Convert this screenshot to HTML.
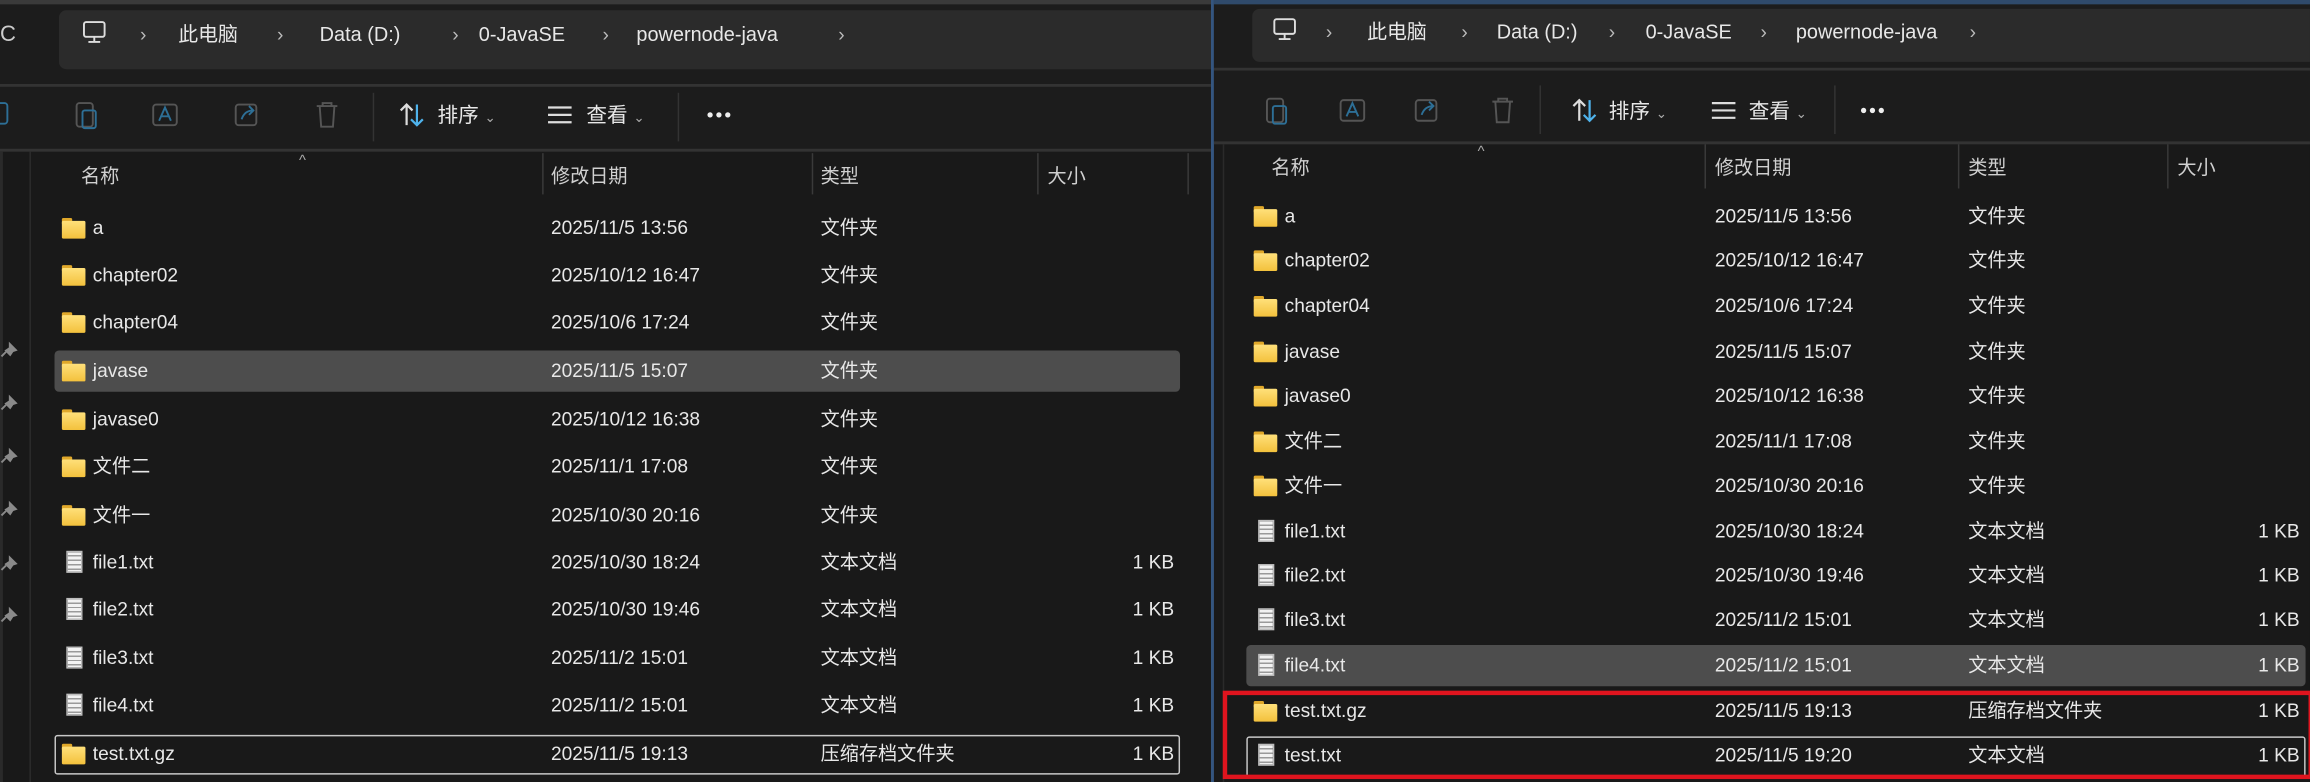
<!DOCTYPE html>
<html><head><meta charset="utf-8"><style>
html,body{margin:0;padding:0;background:#191919;width:2310px;height:782px;overflow:hidden}
#s{position:absolute;left:0;top:0;width:1568px;height:531px;transform:scale(1.47321,1.4727);transform-origin:0 0;background:#191919;font-family:"Liberation Sans","Noto Sans CJK SC",sans-serif;color:#e8e8e8;font-size:13px}
.a{position:absolute;white-space:nowrap;line-height:18px}
.t{position:absolute;white-space:nowrap;line-height:18px;margin-top:-9px}
.hd{color:#d0d0d0}
.bc{font-size:13.5px}
.cv{color:#bbb;font-size:13px}
.vl{position:absolute;width:1px;background:#3a3a3a}
.fd{position:absolute;width:16px;height:12px;margin-top:-6px}
.fd:before{content:"";position:absolute;left:0;top:-2px;width:7px;height:4px;background:#e0a82a;border-radius:1px 1px 0 0}
.fd:after{content:"";position:absolute;left:0;top:0;width:16px;height:12px;background:linear-gradient(#ffe07a,#f3c13c);border-radius:1px}
.fl{position:absolute;width:11px;height:15px;margin-top:-8px;background:repeating-linear-gradient(#f2f2f2 0 2px,#9a9a9a 2px 3px);border:1px solid #bdbdbd;box-sizing:border-box}
.sz{position:absolute;text-align:right;width:60px;line-height:18px;margin-top:-9px}
.pin{position:absolute;left:0}
</style></head><body><div id="s">
<!-- LEFT PANE -->
<div class="a" style="left:0;top:0;width:822px;height:3px;background:#3a3a3a"></div>
<div class="a" style="left:0;top:3px;width:822px;height:54px;background:#1c1c1c"></div>
<div class="a" style="left:40px;top:7px;width:782px;height:40px;background:#2b2b2b;border-radius:5px 0 0 5px"></div>
<div class="a" style="left:0;top:57px;width:822px;height:2px;background:#333"></div>
<div class="a" style="left:0;top:59px;width:822px;height:42px;background:#1c1c1c"></div>
<div class="a" style="left:0;top:101px;width:822px;height:2px;background:#333"></div>
<div class="a" style="left:0;top:103px;width:2px;height:428px;background:#2a2a2a"></div>
<div class="a" style="left:20px;top:103px;width:1px;height:428px;background:#2c2c2c"></div>
<div class="t" style="left:0;top:24px;font-size:15px;color:#ccc">C</div>
<svg class="a" style="left:55px;top:13px" width="18" height="18" viewBox="0 0 18 18" fill="none" stroke="#ddd" stroke-width="1.3"><rect x="2" y="2" width="14" height="10" rx="1.5"/><path d="M9 12v3M5 15.5h8"/></svg>
<div class="t cv" style="left:95px;top:24px">›</div>
<div class="t bc" style="left:121px;top:24px">此电脑</div>
<div class="t cv" style="left:188px;top:24px">›</div>
<div class="t bc" style="left:217px;top:24px">Data (D:)</div>
<div class="t cv" style="left:307px;top:24px">›</div>
<div class="t bc" style="left:325px;top:24px">0-JavaSE</div>
<div class="t cv" style="left:409px;top:24px">›</div>
<div class="t bc" style="left:432px;top:24px">powernode-java</div>
<div class="t cv" style="left:569px;top:24px">›</div>
<svg class="a" style="left:0;top:67px" width="240" height="22" fill="none" stroke-width="1.3"><rect x="-6" y="3" width="11" height="14" rx="2" stroke="#2d6f96"/><rect x="52" y="3" width="11" height="16" rx="2" stroke="#555"/><rect x="56" y="8" width="9" height="12" rx="1.5" stroke="#2d6f96"/><rect x="104" y="4" width="16" height="14" rx="2" stroke="#555"/><path d="M108 15l4-9 4 9M109.5 12h5" stroke="#2d6f96"/><rect x="160" y="4" width="14" height="14" rx="2" stroke="#555"/><path d="M164 14q2-6 8-6M169 5l3 3-3 3" stroke="#2d6f96"/><path d="M215 5h14M219 5V3h6v2M217 5l1 14h8l1-14" stroke="#555"/></svg>
<div class="a" style="left:253px;top:63px;width:1px;height:33px;background:#333"></div>
<svg class="a" style="left:270px;top:68px" width="20" height="20" fill="none" stroke-width="1.5"><path d="M6 17V3M2 7l4-4 4 4" stroke="#ddd"/><path d="M13 3v14M9 13l4 4 4-4" stroke="#4fb3ec"/></svg>
<div class="t" style="left:297px;top:78px;font-size:14px">排序 <span style="font-size:9px;color:#aaa">⌄</span></div>
<svg class="a" style="left:371px;top:70px" width="18" height="16" stroke="#ddd" stroke-width="1.5"><path d="M1 3h16M1 8h16M1 13h16"/></svg>
<div class="t" style="left:398px;top:78px;font-size:14px">查看 <span style="font-size:9px;color:#aaa">⌄</span></div>
<div class="a" style="left:460px;top:63px;width:1px;height:33px;background:#333"></div>
<svg class="a" style="left:479px;top:75px" width="20" height="6" fill="#eee"><circle cx="3" cy="3" r="1.8"/><circle cx="9" cy="3" r="1.8"/><circle cx="15" cy="3" r="1.8"/></svg>
<div class="t" style="left:203px;top:110px;font-size:10px;color:#aaa">^</div>
<div class="t hd" style="left:55px;top:120px">名称</div>
<div class="vl" style="left:368px;top:104px;height:28px"></div>
<div class="t hd" style="left:374px;top:120px">修改日期</div>
<div class="vl" style="left:551px;top:104px;height:28px"></div>
<div class="t hd" style="left:557px;top:120px">类型</div>
<div class="vl" style="left:704px;top:104px;height:28px"></div>
<div class="t hd" style="left:711px;top:120px">大小</div>
<div class="vl" style="left:806px;top:104px;height:28px"></div>
<!-- pins -->
<svg class="pin" style="top:230px" width="14" height="200" fill="#8a8a8a"><g id="p"><path d="M6 2l6 6-3 1-2 3-4-4 3-2z"/><path d="M4 9l-3 3" stroke="#8a8a8a" stroke-width="1.3"/></g><use href="#p" y="36"/><use href="#p" y="72"/><use href="#p" y="108"/><use href="#p" y="145"/><use href="#p" y="180"/></svg>
<div class="a" style="left:37px;top:238px;width:764px;height:28px;background:#4d4d4d;border-radius:3px"></div>
<div class="a" style="left:37px;top:499px;width:762px;height:25px;border:1px solid #c8c8c8;border-radius:2px"></div>
<div class="fd" style="left:42px;top:156px"></div><div class="t" style="left:63px;top:155px">a</div><div class="t" style="left:374px;top:155px">2025/11/5 13:56</div><div class="t" style="left:557px;top:155px">文件夹</div>
<div class="fd" style="left:42px;top:188px"></div><div class="t" style="left:63px;top:187px">chapter02</div><div class="t" style="left:374px;top:187px">2025/10/12 16:47</div><div class="t" style="left:557px;top:187px">文件夹</div>
<div class="fd" style="left:42px;top:220px"></div><div class="t" style="left:63px;top:219px">chapter04</div><div class="t" style="left:374px;top:219px">2025/10/6 17:24</div><div class="t" style="left:557px;top:219px">文件夹</div>
<div class="fd" style="left:42px;top:253px"></div><div class="t" style="left:63px;top:252px">javase</div><div class="t" style="left:374px;top:252px">2025/11/5 15:07</div><div class="t" style="left:557px;top:252px">文件夹</div>
<div class="fd" style="left:42px;top:286px"></div><div class="t" style="left:63px;top:285px">javase0</div><div class="t" style="left:374px;top:285px">2025/10/12 16:38</div><div class="t" style="left:557px;top:285px">文件夹</div>
<div class="fd" style="left:42px;top:318px"></div><div class="t" style="left:63px;top:317px">文件二</div><div class="t" style="left:374px;top:317px">2025/11/1 17:08</div><div class="t" style="left:557px;top:317px">文件夹</div>
<div class="fd" style="left:42px;top:351px"></div><div class="t" style="left:63px;top:350px">文件一</div><div class="t" style="left:374px;top:350px">2025/10/30 20:16</div><div class="t" style="left:557px;top:350px">文件夹</div>
<div class="fl" style="left:45px;top:382px"></div><div class="t" style="left:63px;top:382px">file1.txt</div><div class="t" style="left:374px;top:382px">2025/10/30 18:24</div><div class="t" style="left:557px;top:382px">文本文档</div><div class="sz" style="left:737px;top:382px">1 KB</div>
<div class="fl" style="left:45px;top:414px"></div><div class="t" style="left:63px;top:414px">file2.txt</div><div class="t" style="left:374px;top:414px">2025/10/30 19:46</div><div class="t" style="left:557px;top:414px">文本文档</div><div class="sz" style="left:737px;top:414px">1 KB</div>
<div class="fl" style="left:45px;top:447px"></div><div class="t" style="left:63px;top:447px">file3.txt</div><div class="t" style="left:374px;top:447px">2025/11/2 15:01</div><div class="t" style="left:557px;top:447px">文本文档</div><div class="sz" style="left:737px;top:447px">1 KB</div>
<div class="fl" style="left:45px;top:479px"></div><div class="t" style="left:63px;top:479px">file4.txt</div><div class="t" style="left:374px;top:479px">2025/11/2 15:01</div><div class="t" style="left:557px;top:479px">文本文档</div><div class="sz" style="left:737px;top:479px">1 KB</div>
<div class="fd" style="left:42px;top:513px"></div><div class="t" style="left:63px;top:512px">test.txt.gz</div><div class="t" style="left:374px;top:512px">2025/11/5 19:13</div><div class="t" style="left:557px;top:512px">压缩存档文件夹</div><div class="sz" style="left:737px;top:512px">1 KB</div>
<!-- DIVIDER -->
<div class="a" style="left:822px;top:0;width:2px;height:531px;background:#34557f"></div>
<!-- RIGHT PANE -->
<div class="a" style="left:824px;top:0;width:744px;height:3px;background:#2f4a6b"></div>
<div class="a" style="left:824px;top:3px;width:744px;height:43px;background:#1c1c1c"></div>
<div class="a" style="left:850px;top:6px;width:718px;height:36px;background:#2b2b2b;border-radius:5px 0 0 5px"></div>
<div class="a" style="left:824px;top:46px;width:744px;height:2px;background:#333"></div>
<div class="a" style="left:824px;top:48px;width:744px;height:48px;background:#1c1c1c"></div>
<div class="a" style="left:824px;top:96px;width:744px;height:2px;background:#333"></div>
<div class="a" style="left:830px;top:98px;width:1px;height:433px;background:#2a2a2a"></div>
<svg class="a" style="left:863px;top:11px" width="18" height="18" viewBox="0 0 18 18" fill="none" stroke="#ddd" stroke-width="1.3"><rect x="2" y="2" width="14" height="10" rx="1.5"/><path d="M9 12v3M5 15.5h8"/></svg>
<div class="t cv" style="left:900px;top:22px">›</div>
<div class="t bc" style="left:928px;top:22px">此电脑</div>
<div class="t cv" style="left:992px;top:22px">›</div>
<div class="t bc" style="left:1016px;top:22px">Data (D:)</div>
<div class="t cv" style="left:1092px;top:22px">›</div>
<div class="t bc" style="left:1117px;top:22px">0-JavaSE</div>
<div class="t cv" style="left:1195px;top:22px">›</div>
<div class="t bc" style="left:1219px;top:22px">powernode-java</div>
<div class="t cv" style="left:1337px;top:22px">›</div>
<svg class="a" style="left:850px;top:64px" width="200" height="22" fill="none" stroke-width="1.3"><rect x="10" y="3" width="11" height="16" rx="2" stroke="#555"/><rect x="14" y="8" width="9" height="12" rx="1.5" stroke="#2d6f96"/><rect x="60" y="4" width="16" height="14" rx="2" stroke="#555"/><path d="M64 15l4-9 4 9M65.5 12h5" stroke="#2d6f96"/><rect x="111" y="4" width="14" height="14" rx="2" stroke="#555"/><path d="M115 14q2-6 8-6M120 5l3 3-3 3" stroke="#2d6f96"/><path d="M163 5h14M167 5V3h6v2M165 5l1 14h8l1-14" stroke="#555"/></svg>
<div class="a" style="left:1045px;top:58px;width:1px;height:33px;background:#333"></div>
<svg class="a" style="left:1066px;top:65px" width="20" height="20" fill="none" stroke-width="1.5"><path d="M6 17V3M2 7l4-4 4 4" stroke="#ddd"/><path d="M13 3v14M9 13l4 4 4-4" stroke="#4fb3ec"/></svg>
<div class="t" style="left:1092px;top:75px;font-size:14px">排序 <span style="font-size:9px;color:#aaa">⌄</span></div>
<svg class="a" style="left:1161px;top:67px" width="18" height="16" stroke="#ddd" stroke-width="1.5"><path d="M1 3h16M1 8h16M1 13h16"/></svg>
<div class="t" style="left:1187px;top:75px;font-size:14px">查看 <span style="font-size:9px;color:#aaa">⌄</span></div>
<div class="a" style="left:1245px;top:58px;width:1px;height:33px;background:#333"></div>
<svg class="a" style="left:1262px;top:72px" width="20" height="6" fill="#eee"><circle cx="3" cy="3" r="1.8"/><circle cx="9" cy="3" r="1.8"/><circle cx="15" cy="3" r="1.8"/></svg>
<div class="t" style="left:1003px;top:104px;font-size:10px;color:#aaa">^</div>
<div class="t hd" style="left:863px;top:114px">名称</div>
<div class="vl" style="left:1157px;top:98px;height:30px"></div>
<div class="t hd" style="left:1164px;top:114px">修改日期</div>
<div class="vl" style="left:1329px;top:98px;height:30px"></div>
<div class="t hd" style="left:1336px;top:114px">类型</div>
<div class="vl" style="left:1471px;top:98px;height:30px"></div>
<div class="t hd" style="left:1478px;top:114px">大小</div>
<div class="a" style="left:846px;top:438px;width:719px;height:28px;background:#4d4d4d;border-radius:3px"></div>
<div class="a" style="left:846px;top:500px;width:717px;height:26px;border:1px solid #c8c8c8;border-radius:2px"></div>
<div class="a" style="left:830px;top:469px;width:740px;height:60px;border:3px solid #e0141e;box-sizing:border-box"></div>
<div class="fd" style="left:851px;top:148px"></div><div class="t" style="left:872px;top:147px">a</div><div class="t" style="left:1164px;top:147px">2025/11/5 13:56</div><div class="t" style="left:1336px;top:147px">文件夹</div>
<div class="fd" style="left:851px;top:178px"></div><div class="t" style="left:872px;top:177px">chapter02</div><div class="t" style="left:1164px;top:177px">2025/10/12 16:47</div><div class="t" style="left:1336px;top:177px">文件夹</div>
<div class="fd" style="left:851px;top:209px"></div><div class="t" style="left:872px;top:208px">chapter04</div><div class="t" style="left:1164px;top:208px">2025/10/6 17:24</div><div class="t" style="left:1336px;top:208px">文件夹</div>
<div class="fd" style="left:851px;top:240px"></div><div class="t" style="left:872px;top:239px">javase</div><div class="t" style="left:1164px;top:239px">2025/11/5 15:07</div><div class="t" style="left:1336px;top:239px">文件夹</div>
<div class="fd" style="left:851px;top:270px"></div><div class="t" style="left:872px;top:269px">javase0</div><div class="t" style="left:1164px;top:269px">2025/10/12 16:38</div><div class="t" style="left:1336px;top:269px">文件夹</div>
<div class="fd" style="left:851px;top:301px"></div><div class="t" style="left:872px;top:300px">文件二</div><div class="t" style="left:1164px;top:300px">2025/11/1 17:08</div><div class="t" style="left:1336px;top:300px">文件夹</div>
<div class="fd" style="left:851px;top:331px"></div><div class="t" style="left:872px;top:330px">文件一</div><div class="t" style="left:1164px;top:330px">2025/10/30 20:16</div><div class="t" style="left:1336px;top:330px">文件夹</div>
<div class="fl" style="left:854px;top:361px"></div><div class="t" style="left:872px;top:361px">file1.txt</div><div class="t" style="left:1164px;top:361px">2025/10/30 18:24</div><div class="t" style="left:1336px;top:361px">文本文档</div><div class="sz" style="left:1501px;top:361px">1 KB</div>
<div class="fl" style="left:854px;top:391px"></div><div class="t" style="left:872px;top:391px">file2.txt</div><div class="t" style="left:1164px;top:391px">2025/10/30 19:46</div><div class="t" style="left:1336px;top:391px">文本文档</div><div class="sz" style="left:1501px;top:391px">1 KB</div>
<div class="fl" style="left:854px;top:421px"></div><div class="t" style="left:872px;top:421px">file3.txt</div><div class="t" style="left:1164px;top:421px">2025/11/2 15:01</div><div class="t" style="left:1336px;top:421px">文本文档</div><div class="sz" style="left:1501px;top:421px">1 KB</div>
<div class="fl" style="left:854px;top:452px"></div><div class="t" style="left:872px;top:452px">file4.txt</div><div class="t" style="left:1164px;top:452px">2025/11/2 15:01</div><div class="t" style="left:1336px;top:452px">文本文档</div><div class="sz" style="left:1501px;top:452px">1 KB</div>
<div class="fd" style="left:851px;top:484px"></div><div class="t" style="left:872px;top:483px">test.txt.gz</div><div class="t" style="left:1164px;top:483px">2025/11/5 19:13</div><div class="t" style="left:1336px;top:483px">压缩存档文件夹</div><div class="sz" style="left:1501px;top:483px">1 KB</div>
<div class="fl" style="left:854px;top:513px"></div><div class="t" style="left:872px;top:513px">test.txt</div><div class="t" style="left:1164px;top:513px">2025/11/5 19:20</div><div class="t" style="left:1336px;top:513px">文本文档</div><div class="sz" style="left:1501px;top:513px">1 KB</div>
</div></body></html>
